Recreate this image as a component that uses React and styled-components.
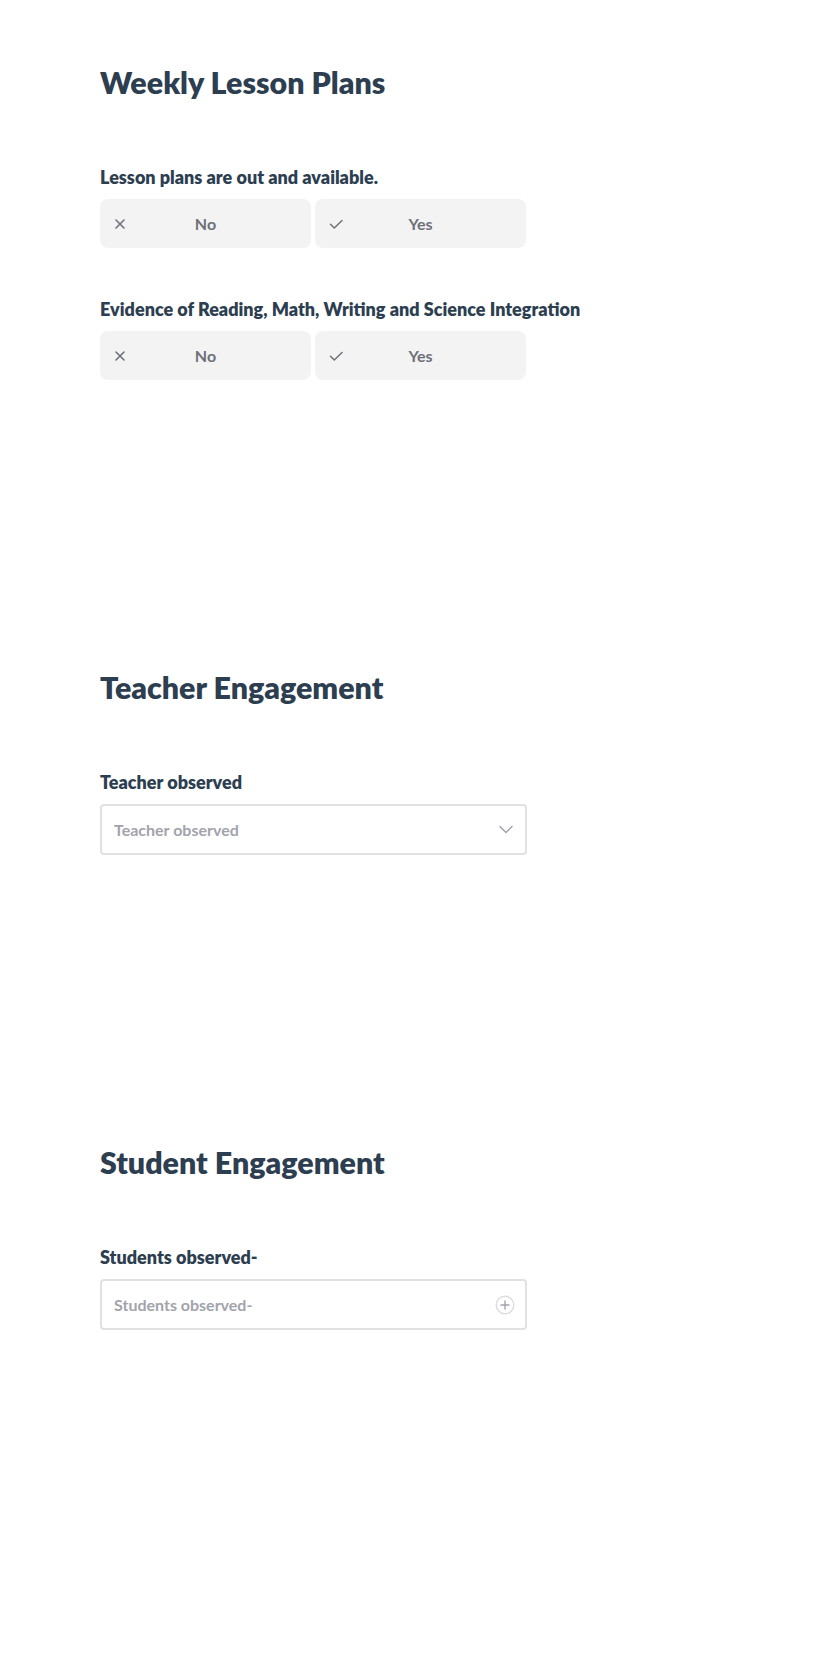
import React from "react"
import styled, { createGlobalStyle } from "styled-components"

const GlobalStyle = createGlobalStyle`
  html, body {
    margin: 0;
    padding: 0;
    background: #ffffff;
  }
  body {
    font-family: Lato, "Open Sans", Arial, sans-serif;
    color: #2c3e50;
  }
`

const Page = styled.main`
  padding: 64px 0 0 100px;
  width: 427px;
`

const Section = styled.section`
  padding-bottom: 289px;
`

const Heading = styled.h2`
  margin: 0;
  font-size: 30.4px;
  line-height: 36px;
  font-weight: 800;
  color: #2c3e50;
  white-space: nowrap;
`

const Fields = styled.div`
  margin-top: 66px;
  display: flex;
  flex-direction: column;
  gap: 50px;
`

const Field = styled.div`
  display: flex;
  flex-direction: column;
  gap: 11px;
`

const Label = styled.label`
  font-size: 18px;
  line-height: 22px;
  font-weight: 800;
  color: #2c3e50;
  white-space: nowrap;
`

const Choices = styled.div`
  display: grid;
  grid-template-columns: 211px 211px;
  gap: 4px;
`

const Choice = styled.button`
  position: relative;
  height: 49px;
  border: none;
  border-radius: 8px;
  background: #f3f3f4;
  font-family: inherit;
  font-size: 16px;
  font-weight: 700;
  color: #6e7079;
  display: flex;
  align-items: center;
  justify-content: center;
  padding: 0;
  cursor: pointer;

  svg {
    position: absolute;
    left: 14px;
    top: 50%;
    transform: translateY(-50%);
  }
`

const Input = styled.div`
  height: 47px;
  border: 2px solid #e1e1e3;
  border-radius: 4px;
  display: flex;
  align-items: center;
  justify-content: space-between;
  padding: 0 ${(p) => p.padRight}px 0 12px;
`

const Placeholder = styled.span`
  font-size: 16px;
  font-weight: 700;
  color: #a2a3ab;
`

const XIcon = () => (
  <svg width="12" height="12" viewBox="0 0 12 12" fill="none">
    <path d="M2 2l8 8M10 2l-8 8" stroke="#6e7079" strokeWidth="1.6" strokeLinecap="round" />
  </svg>
)

const CheckIcon = () => (
  <svg width="14" height="12" viewBox="0 0 14 12" fill="none">
    <path d="M1.5 6.2l3.8 3.8 7.7-7.5" stroke="#6e7079" strokeWidth="1.5" strokeLinecap="round" strokeLinejoin="round" />
  </svg>
)

const Chevron = () => (
  <svg width="14" height="9" viewBox="0 0 14 9" fill="none">
    <path d="M1 1.5l6 6 6-6" stroke="#a2a3ab" strokeWidth="1.5" strokeLinecap="round" strokeLinejoin="round" />
  </svg>
)

const PlusCircle = () => (
  <svg width="20" height="20" viewBox="0 0 20 20" fill="none">
    <circle cx="10" cy="10" r="8.8" stroke="#dcdcdf" strokeWidth="1.4" />
    <path d="M10 6v8M6 10h8" stroke="#a2a3ab" strokeWidth="1.4" strokeLinecap="round" />
  </svg>
)

const YesNo = ({ label }) => (
  <Field>
    <Label>{label}</Label>
    <Choices>
      <Choice>
        <XIcon />
        No
      </Choice>
      <Choice>
        <CheckIcon />
        Yes
      </Choice>
    </Choices>
  </Field>
)

const TextField = ({ label, icon, padRight }) => (
  <Field>
    <Label>{label}</Label>
    <Input padRight={padRight}>
      <Placeholder>{label}</Placeholder>
      {icon}
    </Input>
  </Field>
)

export default function App() {
  return (
    <>
      <GlobalStyle />
      <Page>
        <Section>
          <Heading>Weekly Lesson Plans</Heading>
          <Fields>
            <YesNo label="Lesson plans are out and available." />
            <YesNo label="Evidence of Reading, Math, Writing and Science Integration" />
          </Fields>
        </Section>
        <Section>
          <Heading>Teacher Engagement</Heading>
          <Fields>
            <TextField label="Teacher observed" icon={<Chevron />} padRight={12} />
          </Fields>
        </Section>
        <Section>
          <Heading>Student Engagement</Heading>
          <Fields>
            <TextField label="Students observed-" icon={<PlusCircle />} padRight={10} />
          </Fields>
        </Section>
      </Page>
    </>
  )
}
